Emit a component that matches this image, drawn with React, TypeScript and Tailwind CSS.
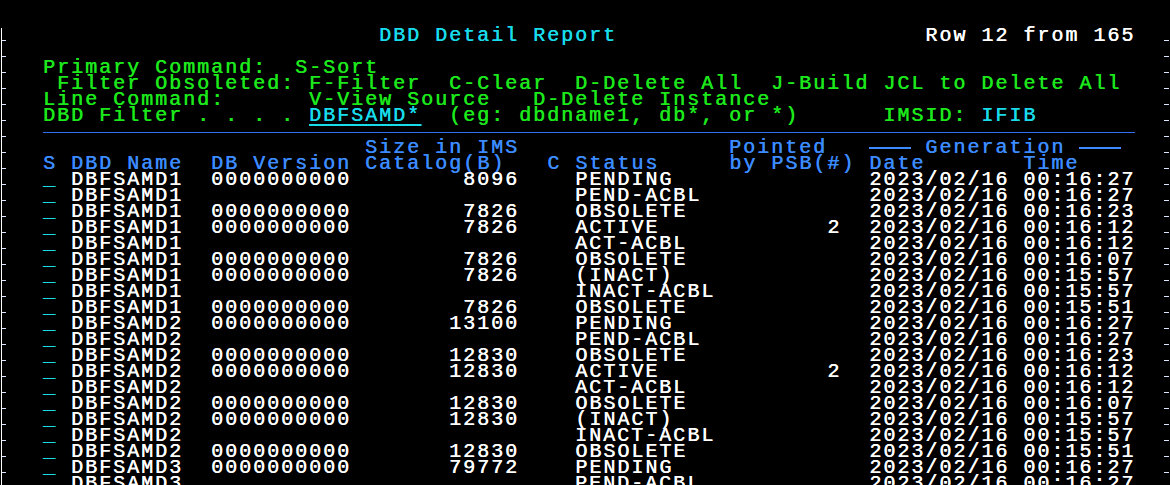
import React from "react";

type Part = { col: number; text?: string; cls: string; dash?: boolean };

function Line({ parts }: { parts: Part[] }) {
  const kids: React.ReactNode[] = [];
  let cur = 3;
  parts.forEach((p, i) => {
    if (p.col > cur) kids.push(" ".repeat(p.col - cur));
    if (p.dash) {
      kids.push(<span key={i} className="inline-block w-[42px] h-[2px] bg-[#3c8cff] align-middle" />);
      cur = p.col + 3;
    } else {
      kids.push(
        <span key={i} className={p.cls}>
          {p.text}
        </span>
      );
      cur = p.col + (p.text ?? "").length;
    }
  });
  return <div className="h-4 shrink-0 leading-4 whitespace-pre">{kids}</div>;
}

const G = "text-[#1ce81c]";
const C = "text-[#18dcea]";
const B = "text-[#3c8cff]";
const W = "text-white";

const data: string[][] = [
  ["DBFSAMD1", "0000000000", "8096", "PENDING", "", "00:16:27"],
  ["DBFSAMD1", "", "", "PEND-ACBL", "", "00:16:27"],
  ["DBFSAMD1", "0000000000", "7826", "OBSOLETE", "", "00:16:23"],
  ["DBFSAMD1", "0000000000", "7826", "ACTIVE", "2", "00:16:12"],
  ["DBFSAMD1", "", "", "ACT-ACBL", "", "00:16:12"],
  ["DBFSAMD1", "0000000000", "7826", "OBSOLETE", "", "00:16:07"],
  ["DBFSAMD1", "0000000000", "7826", "(INACT)", "", "00:15:57"],
  ["DBFSAMD1", "", "", "INACT-ACBL", "", "00:15:57"],
  ["DBFSAMD1", "0000000000", "7826", "OBSOLETE", "", "00:15:51"],
  ["DBFSAMD2", "0000000000", "13100", "PENDING", "", "00:16:27"],
  ["DBFSAMD2", "", "", "PEND-ACBL", "", "00:16:27"],
  ["DBFSAMD2", "0000000000", "12830", "OBSOLETE", "", "00:16:23"],
  ["DBFSAMD2", "0000000000", "12830", "ACTIVE", "2", "00:16:12"],
  ["DBFSAMD2", "", "", "ACT-ACBL", "", "00:16:12"],
  ["DBFSAMD2", "0000000000", "12830", "OBSOLETE", "", "00:16:07"],
  ["DBFSAMD2", "0000000000", "12830", "(INACT)", "", "00:15:57"],
  ["DBFSAMD2", "", "", "INACT-ACBL", "", "00:15:57"],
  ["DBFSAMD2", "0000000000", "12830", "OBSOLETE", "", "00:15:51"],
  ["DBFSAMD3", "0000000000", "79772", "PENDING", "", "00:16:27"],
  ["DBFSAMD3", "", "", "PEND-ACBL", "", "00:16:27"],
];

const TICKS = Array.from({ length: 29 }, (_, i) => i);

export default function App() {
  return (
    <div className="w-[1170px] h-[485px] bg-black overflow-hidden flex font-['Liberation_Mono',monospace] text-[20px] tracking-[2px] [text-shadow:0.5px_0_0_currentColor]">
      {/* left gutter */}
      <div className="w-[43px] shrink-0 pt-[28px] flex">
        <div className="ml-[1px] border-l border-white h-full flex flex-col">
          {TICKS.map((i) => (
            <div key={i} className="h-4 shrink-0 pt-[12px]">
              <div className="w-[4px] h-[1px] bg-[#dde4ff]" />
            </div>
          ))}
        </div>
      </div>

      {/* screen */}
      <div className="w-[1092px] shrink-0 pt-[28px] flex flex-col">
        <Line
          parts={[
            { col: 27, text: "DBD Detail Report", cls: C },
            { col: 66, text: "Row 12 from 165", cls: W },
          ]}
        />
        <Line parts={[]} />
        <Line parts={[{ col: 3, text: "Primary Command:  S-Sort", cls: G }]} />
        <Line
          parts={[
            { col: 4, text: "Filter Obsoleted: F-Filter  C-Clear  D-Delete All  J-Build JCL to Delete All", cls: G },
          ]}
        />
        <Line parts={[{ col: 3, text: "Line Command:      V-View Source   D-Delete Instance", cls: G }]} />
        <div className="h-4 shrink-0 leading-4 whitespace-pre">
          <span className={G}>{"DBD Filter . . . . "}</span>
          <span className="text-[#18dcea] underline decoration-[#18dcea] underline-offset-[3px]">DBFSAMD*</span>
          <span className={G}>{"  (eg: dbdname1, db*, or *)      IMSID: "}</span>
          <span className={C}>IFIB</span>
        </div>
        <div className="h-4 shrink-0 flex items-center">
          <div className="w-[1092px] h-[1px] bg-[#3070f0]" />
        </div>
        <Line
          parts={[
            { col: 26, text: "Size in IMS", cls: B },
            { col: 52, text: "Pointed", cls: B },
            { col: 62, cls: B, dash: true },
            { col: 66, text: "Generation", cls: B },
            { col: 77, cls: B, dash: true },
          ]}
        />
        <Line
          parts={[
            { col: 3, text: "S", cls: B },
            { col: 5, text: "DBD Name", cls: B },
            { col: 15, text: "DB Version", cls: B },
            { col: 26, text: "Catalog(B)", cls: B },
            { col: 39, text: "C", cls: B },
            { col: 41, text: "Status", cls: B },
            { col: 52, text: "by PSB(#)", cls: B },
            { col: 62, text: "Date", cls: B },
            { col: 73, text: "Time", cls: B },
          ]}
        />
        {data.map((r, i) => {
          const parts: Part[] = [
            { col: 3, text: "_", cls: C },
            { col: 5, text: r[0], cls: W },
          ];
          if (r[1]) parts.push({ col: 15, text: r[1], cls: W });
          if (r[2]) parts.push({ col: 37 - r[2].length, text: r[2], cls: W });
          parts.push({ col: 41, text: r[3], cls: W });
          if (r[4]) parts.push({ col: 59, text: r[4], cls: W });
          parts.push({ col: 62, text: "2023/02/16", cls: W });
          parts.push({ col: 73, text: r[5], cls: W });
          return <Line key={i} parts={parts} />;
        })}
      </div>

      {/* right gutter */}
      <div className="flex-1 pt-[28px] pl-[29px] flex flex-col">
        {TICKS.map((i) => (
          <div key={i} className="h-4 shrink-0 pt-[12px]">
            <div className="w-[5px] h-[1px] bg-[#dde4ff]" />
          </div>
        ))}
      </div>
    </div>
  );
}
